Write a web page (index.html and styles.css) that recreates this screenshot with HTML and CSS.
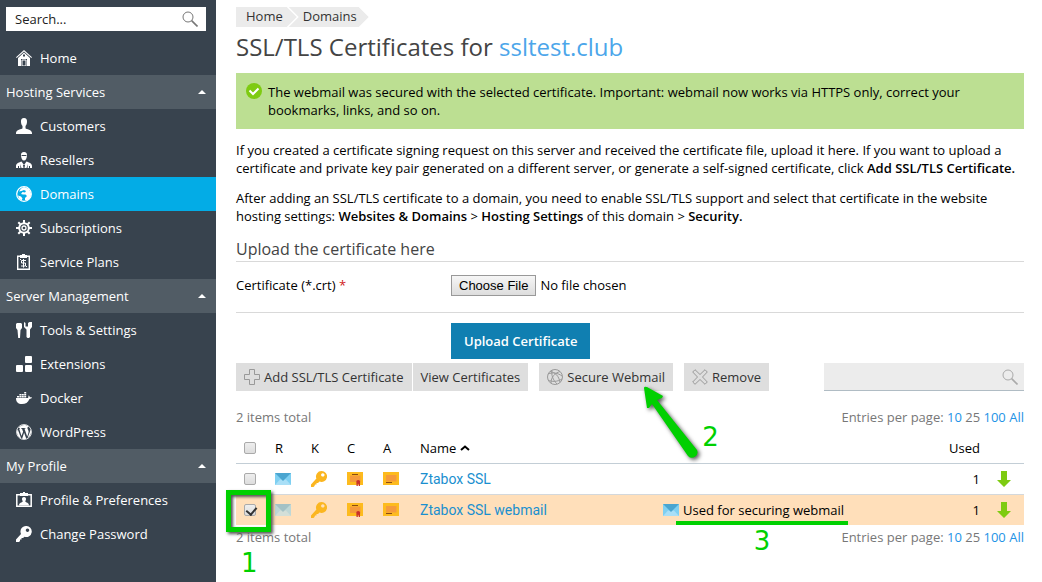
FILE: index.html
```html
<!DOCTYPE html>
<html lang="en">
<head>
<meta charset="utf-8">
<title>SSL/TLS Certificates</title>
<link rel="stylesheet" href="styles.css">
</head>
<body>
<svg class="sprite" aria-hidden="true">
    <symbol id="i-search" viewBox="0 0 16 16"><circle cx="6" cy="6" r="5" fill="none" stroke="currentColor"/><path d="M9.6 9.6L15.5 15.5" stroke="currentColor" stroke-width="1.6"/></symbol>
    <symbol id="i-mail" viewBox="0 0 16 12"><path fill="#7fd0f2" d="M0 0h16v12H0z"/><path fill="#a9dff7" d="M0 12l5-5.500h6L16 12z"/><path fill="#4aa5d0" d="M0 0h16L8 8z"/></symbol>
    <symbol id="i-key" viewBox="0 0 16 16"><path fill="#fbb620" fill-rule="evenodd" d="M10.500 0a5.500 5.500 0 1 1-2 10.600L7 12H5.500v1.500H4L3.500 15 2.500 16H0v-2.500l5.400-5.900A5.500 5.500 0 0 1 10.500 0zM11.800 2.200a1.700 1.700 0 1 0 .01 0z"/></symbol>
    <symbol id="i-cert" viewBox="0 0 16 14"><path fill="#fdbb1e" d="M0 0h16v13H0z"/><path fill="#f59a3c" d="M3 3.500h10.500V10H3z"/><path fill="#8a4b14" d="M5 2h6v1H5z"/><path fill="#c9302c" d="M9.500 11h1.300v3H9.500zM11.700 11h1.300v3h-1.300z"/><circle cx="11.200" cy="10" r="2" fill="#c9302c"/></symbol>
    <symbol id="i-ca" viewBox="0 0 16 14"><path fill="#fdbb1e" d="M0 0h16v13H0z"/><path fill="#f59a3c" d="M3 3h10.500v6.500H3z"/><path fill="#8a4b14" d="M3 10h6v1H3z"/></symbol>
    <symbol id="i-down" viewBox="0 0 14 16"><path fill="#7ecb12" d="M4 0h6v9h4l-7 7-7-7h4z"/></symbol>
</svg>
<div class="layout">
    <aside class="sidebar">
        <form class="search">
            <input type="text" placeholder="Search..." aria-label="Search">
            <button type="button" aria-label="Search"><svg><use href="#i-search"/></svg></button>
        </form>
        <nav>
            <a class="item" href="#"><svg viewBox="0 0 16 16"><path d="M8 0l8 7.200-.7.8L8 1.500.7 8 0 7.200z"/><path fill-rule="evenodd" d="M8 2.500L14 8v8h-3V9H5v7H2V8zM7 4.500v2h2v-2z"/><path d="M6 10h4v6H6z" fill="none" stroke="#fff"/></svg>Home</a>
            <button class="group" type="button">Hosting Services<span class="caret"></span></button>
            <a class="item" href="#"><svg viewBox="0 0 16 16"><path d="M8 0c2.200 0 3.200 1.600 3 4-.1 2-.7 3.200-1.500 4v2.200c.8 1.200 6.500 1.300 6.500 4.800v1H0v-1c0-3.500 5.700-3.600 6.500-4.800V8C5.700 7.200 5.100 6 5 4 4.800 1.600 5.800 0 8 0z"/></svg>Customers</a>
            <a class="item" href="#"><svg viewBox="0 0 16 16"><path d="M8 0c2.200 0 3.200 1.300 3 3.500C10.900 6 9.800 8.600 8 8.600S5.100 6 5 3.500C4.800 1.300 5.800 0 8 0z"/><path d="M5.500 9.500L8 13l2.500-3.500c2 1 5.500 1.500 5.500 4.500v2H0v-2c0-3 3.500-3.500 5.500-4.500z"/><path fill="#38434e" d="M5.600 3h4.800v.9H5.600zM4 12l1.500 4h-1zM12 12l-1.500 4h1zM7 13h2l-.5 3h-1zM2 14h1v2H2zM13 14h1v2h-1z"/></svg>Resellers</a>
            <a class="item active" href="#"><svg viewBox="0 0 16 16"><circle cx="8" cy="8" r="7.300" fill="none" stroke="#fff" stroke-width="1.300"/><path d="M8 1l5 2 2.200 5-1 4-3.200 2.500-2-.5 0-2 2-2-1.500-1.500L7 8.500 5 8l1.500-2L9 6.500l1-1.500-2-1-2.500 1L3 5.500 5 2.500zM2 9.500l3 1 1.500 2-1 2L3 12.500z"/></svg>Domains</a>
            <a class="item" href="#"><svg viewBox="0 0 16 16"><g fill="none" stroke="#fff"><circle cx="8" cy="8" r="4.800" stroke-width="2"/><circle cx="8" cy="8" r="2" stroke-width="1.300"/><path stroke-width="2" d="M8 0v3M8 13v3M0 8h3M13 8h3M2.300 2.300l2 2M11.700 11.700l2 2M2.300 13.700l2-2M11.700 4.300l2-2"/></g></svg>Subscriptions</a>
            <a class="item" href="#"><svg viewBox="0 0 16 16"><path fill="none" stroke="#fff" stroke-width="1.400" d="M1.700 2.200h11.600v13.100H1.700z"/><path d="M4 1h2V0h3v1h2v3H4z"/><path fill="none" stroke="#fff" d="M10 6.500H5.500v2.500h4v3H5M7.500 5v8.500M4 5.500h1M10 12.500h1"/></svg>Service Plans</a>
            <button class="group" type="button">Server Management<span class="caret"></span></button>
            <a class="item" href="#"><svg viewBox="0 0 16 16"><path d="M1 1h4l1 1v4L4.500 8 4 16H2.200L1.500 8 0 6V2zM8 0l1.500 1v3.500h2.500V1l1.500-1H16v5l-2 2.500V15l-1 1h-1.500L10.500 15V7.500L8 5z"/></svg>Tools &amp; Settings</a>
            <a class="item" href="#"><svg viewBox="0 0 16 16"><rect x="9" y="0" width="7" height="7" rx="1"/><rect x="0" y="9" width="7" height="7" rx="1"/><rect x="9" y="9" width="7" height="7" rx="1"/></svg>Extensions</a>
            <a class="item" href="#"><svg viewBox="0 0 16 16"><path d="M0 8h12c.6-.5.200-1.500.5-2.500 1 .3 1.200 1 1.300 1.800.8-.2 1.600 0 2.200.3-.5 1-1.400 1.300-2.500 1.300C12 12.500 9.500 14 6 14c-4 0-6-2-6-6zM1 6h2v1.500H1zM3.400 6h2v1.500h-2zM5.800 6h2v1.500h-2zM8.200 6h2v1.500h-2zM3.400 4h2v1.500h-2zM5.800 4h2v1.500h-2zM8.200 4h2v1.500h-2zM8.200 2h2v1.500h-2z"/></svg>Docker</a>
            <a class="item" href="#"><svg viewBox="0 0 16 16"><circle cx="8" cy="8" r="7.500" fill="none" stroke="#fff" stroke-width=".8"/><path d="M1.700 5.200L5.200 14.600A7 7 0 0 1 1.700 5.200zM2.500 4C5 .2 10 .1 12.700 2.800c-1.700.3-1.500 1.700-.7 2.900 1 1.600.6 2.600 0 4.500l-.8 2.400L8.500 4.800l1-.2V4H5v.6l1 .2 1.100 3L5.500 12 3.200 4.800l.8-.2V4zM8.100 8.700l2.200 6a7 7 0 0 1-4.200.1zM14.300 5A7 7 0 0 1 11.600 14l2.200-6c.4-1.100.5-2 .5-3z"/></svg>WordPress</a>
            <button class="group" type="button">My Profile<span class="caret"></span></button>
            <a class="item" href="#"><svg viewBox="0 0 16 16"><path fill="none" stroke="#fff" stroke-width="1.500" d="M.8 2.800h14.400v11.400H.8z"/><path d="M4 1h3V0h2v1h3v3H4z"/><path d="M8 5c1.500 0 2.200 1 2 2.500l-.8 2c.8 1 3.800 1 3.800 4H3c0-3 3-3 3.800-4l-.8-2C5.800 6 6.500 5 8 5z"/></svg>Profile &amp; Preferences</a>
            <a class="item" href="#"><svg viewBox="0 0 16 16"><path fill-rule="evenodd" d="M10 0a5.500 5.500 0 1 1-1.500 10.700L7 12H5.500v1.500H4V15l-1 1H0v-2.500l5-5.600A5.500 5.500 0 0 1 10 0zM11.500 2.500a1.700 1.700 0 1 0 .01 0z"/></svg>Change Password</a>
        </nav>
    </aside>
    <main>
        <div class="crumbs"><a href="#">Home</a><a href="#">Domains</a></div>
        <h1>SSL/TLS Certificates for <a href="#">ssltest.club</a></h1>
        <div class="message">
            <svg viewBox="0 0 16 16"><circle cx="8" cy="8" r="8" fill="#7ecb12"/><path fill="none" stroke="#fff" stroke-width="2" d="M3.500 7.500L7 11l5.500-5.500"/></svg>
            <span>The webmail was secured with the selected certificate. Important: webmail now works via HTTPS only, correct your bookmarks, links, and so on.</span>
        </div>
        <p>If you created a certificate signing request on this server and received the certificate file, upload it here. If you want to upload a certificate and private key pair generated on a different server, or generate a self-signed certificate, click <b>Add SSL/TLS Certificate.</b></p>
        <p>After adding an SSL/TLS certificate to a domain, you need to enable SSL/TLS support and select that certificate in the website hosting settings: <b>Websites &amp; Domains</b> &gt; <b>Hosting Settings</b> of this domain &gt; <b>Security.</b></p>
        <form class="upload">
            <h2>Upload the certificate here</h2>
            <div class="field">
                <label for="crt">Certificate (*.crt) <span class="required">*</span></label>
                <input type="file" id="crt">
            </div>
            <div class="submit"><button type="button">Upload Certificate</button></div>
        </form>
        <div class="toolbar">
            <button type="button"><svg viewBox="0 0 16 16"><path d="M5.500.5h5v5h5v5h-5v5h-5v-5h-5v-5h5z"/></svg>Add SSL/TLS Certificate</button>
            <button type="button">View Certificates</button>
            <button class="apart" type="button"><svg viewBox="0 0 16 16"><circle cx="8" cy="8" r="7.500"/><path d="M3 2.500C8 3 12 7 13 13.500M1 5c5-2 10-1 14 2M13 2.500C8 4 4 8 4 14M1 11c4 2 9 2 14-1M5 1c-1 5 1 10 5 14"/></svg>Secure Webmail
                <span class="step two"><svg viewBox="0 0 60 76"><path d="M5 5Q5 3 8 4L24 13 23 15 18 17 58 67A5.500 5.500 0 0 1 49 73L13 21 10 25 8 25Z"/></svg><span>2</span></span>
            </button>
            <button class="apart" type="button"><svg viewBox="0 0 16 16"><path d="M3 .7L8 5.500 13 .7 15.300 3 10.500 8l4.800 5-2.300 2.300-5-4.800-5 4.800L.7 13l4.800-5L.7 3z"/></svg>Remove</button>
            <div class="find"><input type="text" aria-label="Find certificate"><svg><use href="#i-search"/></svg></div>
        </div>
        <div class="pager"><span>2 items total</span><span>Entries per page: <a href="#">10</a> 25 <a href="#">100</a> <a href="#">All</a></span></div>
        <table>
            <thead>
                <tr><th class="check"><input type="checkbox" aria-label="Select all"></th><th class="icon">R</th><th class="icon">K</th><th class="icon">C</th><th class="icon">A</th><th class="name">Name <svg viewBox="0 0 10 8"><path fill="none" stroke="#000" stroke-width="2" d="M1 5l4-3.500L9 5"/></svg></th><th></th><th class="used">Used</th><th class="get"></th></tr>
            </thead>
            <tbody>
                <tr>
                    <td class="check"><input type="checkbox" aria-label="Select Ztabox SSL"></td>
                    <td class="icon"><svg class="mail"><use href="#i-mail"/></svg></td>
                    <td class="icon"><svg><use href="#i-key"/></svg></td>
                    <td class="icon"><svg><use href="#i-cert"/></svg></td>
                    <td class="icon"><svg><use href="#i-ca"/></svg></td>
                    <td class="name"><a href="#">Ztabox SSL</a></td>
                    <td></td>
                    <td class="used">1</td>
                    <td class="get"><svg><use href="#i-down"/></svg></td>
                </tr>
                <tr class="selected">
                    <td class="check"><input type="checkbox" checked aria-label="Select Ztabox SSL webmail"><span class="step one"><span>1</span></span></td>
                    <td class="icon"><svg class="mail off"><use href="#i-mail"/></svg></td>
                    <td class="icon"><svg><use href="#i-key"/></svg></td>
                    <td class="icon"><svg><use href="#i-cert"/></svg></td>
                    <td class="icon"><svg><use href="#i-ca"/></svg></td>
                    <td class="name"><a href="#">Ztabox SSL webmail</a></td>
                    <td><div class="usage"><svg class="mail"><use href="#i-mail"/></svg>Used for securing webmail<span class="step three">3</span></div></td>
                    <td class="used">1</td>
                    <td class="get"><svg><use href="#i-down"/></svg></td>
                </tr>
            </tbody>
        </table>
        <div class="pager bottom"><span>2 items total</span><span>Entries per page: <a href="#">10</a> 25 <a href="#">100</a> <a href="#">All</a></span></div>
    </main>
</div>
</body>
</html>
```
FILE: styles.css
```css
* {
    box-sizing: border-box;
}

body {
    margin: 0;
    background: #fff;
    color: #000;
    font: 13px/18px "Open Sans", sans-serif;
}

a {
    color: #2393e6;
    text-decoration: none;
}

b {
    font-weight: 600;
}

button, input {
    font: inherit;
    border: none;
}

button {
    cursor: pointer;
}

svg {
    width: 16px;
    height: 16px;
    flex: none;
}

.sprite {
    display: none;
}

.layout {
    display: flex;
    min-height: 100vh;
}

/* sidebar */
.sidebar {
    width: 216px;
    flex: none;
    background: #38434e;
    color: #fff;
}

.search {
    display: flex;
    margin: 7px 10px 10px 6px;
    height: 24px;
    background: #fff;
    color: #777;
}

.search input {
    flex: 1;
    min-width: 0;
    padding: 0 9px;
    background: none;
}

.search input::placeholder {
    color: #222;
}

.search button {
    width: 32px;
    padding: 4px 8px;
    background: none;
    color: inherit;
    line-height: 0;
}

.item, .group {
    display: flex;
    align-items: center;
    width: 100%;
    height: 34px;
    color: #fff;
}

.item {
    gap: 8px;
    padding-left: 16px;
}

.item svg {
    fill: #fff;
}

.active {
    background: #03ace6;
}

.group {
    justify-content: space-between;
    padding: 0 10px 0 6px;
    background: #515c65;
}

.caret {
    border: 4px solid transparent;
    border-top: none;
    border-bottom-color: #fff;
}

/* content */
main {
    flex: 1;
    min-width: 0;
    padding: 7px 18px 0 20px;
}

.crumbs {
    display: flex;
}

.crumbs a {
    height: 20px;
    padding: 0 14px 0 10px;
    background: #ebebeb;
    color: #333;
    clip-path: polygon(0 0, calc(100% - 10px) 0, 100% 50%, calc(100% - 10px) 100%, 0 100%);
}

.crumbs a + a {
    margin-left: -8px;
    padding: 0 12px 0 14px;
    clip-path: polygon(0 0, calc(100% - 10px) 0, 100% 50%, calc(100% - 10px) 100%, 0 100%, 10px 50%);
}

h1 {
    margin: 4px 0 10px;
    color: #444;
    font-size: 24px;
    line-height: 32px;
    font-weight: 400;
}

h1 a {
    color: #4ca6ea;
}

.message {
    display: flex;
    gap: 6px;
    margin-bottom: 12px;
    padding: 10px;
    background: #bcdf92;
}

p {
    margin: 0 0 12px;
}

h2 {
    margin: 0;
    border-bottom: 1px solid #d9d9d9;
    color: #444;
    font-size: 16px;
    line-height: 24px;
    font-weight: 400;
}

.field {
    display: flex;
    align-items: center;
    height: 51px;
    padding-bottom: 4px;
    border-bottom: 1px solid #d9d9d9;
}

.field label {
    width: 215px;
}

.required {
    color: #d02020;
}

.field input::file-selector-button {
    height: 21px;
    margin-right: 4px;
    padding: 0 7px;
    border: 1px solid #999;
    background: linear-gradient(#f6f6f6, #ddd);
    font: 13px "Liberation Sans", Arial, sans-serif;
}

.submit {
    padding: 10px 0 4px 215px;
}

.submit button {
    height: 36px;
    padding: 0 13px;
    background: #107fb1;
    color: #fff;
    font-weight: 600;
}

.toolbar {
    display: flex;
    gap: 1px;
}

.toolbar button {
    position: relative;
    display: flex;
    align-items: center;
    gap: 4px;
    height: 28px;
    padding: 0 8px;
    background: #dedede;
    color: #333;
    white-space: nowrap;
}

.toolbar button > svg {
    fill: none;
    stroke: #999;
}

.toolbar .apart {
    margin-left: 10px;
}

.find {
    display: flex;
    align-items: center;
    width: 200px;
    height: 28px;
    margin-left: auto;
    padding-right: 6px;
    border-bottom: 1px solid #b0bcc4;
    background: #ececec;
    color: #aaa;
}

.find input {
    flex: 1;
    min-width: 0;
    background: none;
}

.pager {
    display: flex;
    justify-content: space-between;
    margin-top: 17px;
    color: #777;
}

/* certificates list */
table {
    width: 100%;
    margin-top: 7px;
    border-collapse: collapse;
    table-layout: fixed;
}

th, td {
    height: 31px;
    padding: 0;
    border-bottom: 1px solid #c3ced6;
    font-weight: 400;
    text-align: left;
}

th {
    height: 30px;
}

td {
    border-color: #d3d8dc;
}

tr:last-child td {
    border-bottom: none;
}

td svg {
    display: block;
}

.selected {
    background: #ffdfba;
}

.check {
    position: relative;
    width: 25px;
}

.check input {
    display: block;
    width: 12px;
    height: 12px;
    margin: 0 0 0 8px;
    border: 1px solid #aaa;
    border-radius: 2px;
    background: linear-gradient(#eee, #ddd);
    appearance: none;
}

.check input:checked::before {
    content: "";
    display: block;
    width: 5px;
    height: 8px;
    margin: 0 0 0 3px;
    border: solid #333;
    border-width: 0 2px 2px 0;
    transform: rotate(40deg);
}

.icon {
    width: 36px;
    padding-left: 14px;
}

.mail {
    height: 12px;
}

.off {
    opacity: .5;
}

.name {
    width: 258px;
    padding-left: 15px;
}

.name svg {
    width: 10px;
    height: 8px;
}

.name a {
    color: #1a8fcf;
    font: 14px Roboto, Arial, sans-serif;
}

.usage {
    position: relative;
    display: flex;
    align-items: center;
    gap: 4px;
    width: max-content;
}

.used {
    width: 60px;
    text-align: right;
}

.get {
    width: 44px;
    padding-left: 16px;
}

.bottom {
    margin-top: 3px;
}

/* numbered steps over the page */
.step {
    position: absolute;
    color: #00d000;
    font-family: "DejaVu Sans", sans-serif;
    font-size: 26px;
    line-height: 32px;
}

.one {
    left: -10px;
    top: -5px;
    width: 45px;
    height: 42px;
    border: 5px solid #00d000;
    box-shadow: 2px 2px 3px #555, inset 2px 2px 3px #555;
}

.one span {
    position: absolute;
    left: 10px;
    top: 52px;
}

.two {
    left: 100px;
    top: 20px;
}

.two svg {
    width: 60px;
    height: 76px;
    fill: #00d000;
    filter: drop-shadow(2px 2px 2px #555);
}

.two span {
    position: absolute;
    left: 63px;
    top: 38px;
}

.three {
    left: 13px;
    right: -4px;
    top: 20px;
    border-top: 4px solid #00d000;
    text-align: center;
}
```
